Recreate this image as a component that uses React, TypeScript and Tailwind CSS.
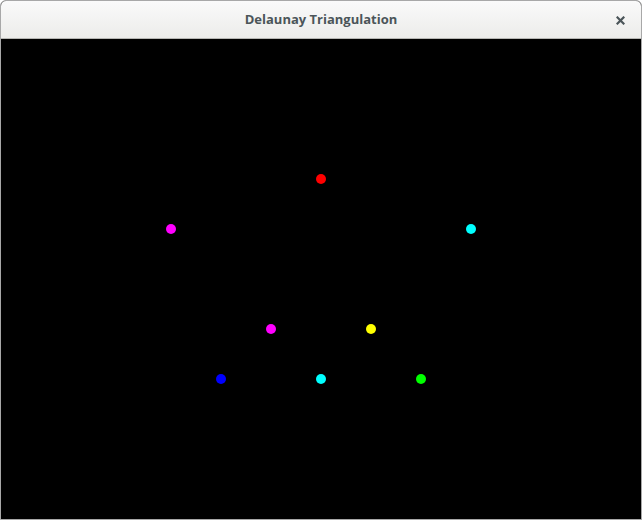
const dots = [
  { x: 321, y: 179, c: '#ff0000' },
  { x: 171, y: 229, c: '#ff00ff' },
  { x: 471, y: 229, c: '#00ffff' },
  { x: 271, y: 329, c: '#ff00ff' },
  { x: 371, y: 329, c: '#ffff00' },
  { x: 221, y: 379, c: '#0000ff' },
  { x: 321, y: 379, c: '#00ffff' },
  { x: 421, y: 379, c: '#00ff00' },
];

export default function App() {
  return (
    <div className="flex h-[520px] w-[642px] flex-col overflow-hidden rounded-t-[6px] border border-[#a8a8a8] bg-black">
      {/* title bar */}
      <div className="relative flex h-[38px] shrink-0 items-center justify-center border-b border-[#b6b6b3] bg-gradient-to-b from-[#fafafa] to-[#ececea]">
        <span className="font-['Open_Sans',sans-serif] text-[13px] font-bold text-[#4b5559]">
          Delaunay Triangulation
        </span>
        <svg width="9" height="9" viewBox="0 0 9 9" className="absolute right-[16px] top-[15px]">
          <path d="M1.5 1.5 L7.5 7.5 M7.5 1.5 L1.5 7.5" stroke="#4b5559" strokeWidth="2.2" strokeLinecap="square" />
        </svg>
      </div>
      {/* canvas */}
      <div className="relative flex-1 bg-black">
        <svg width="640" height="480" className="absolute left-0 top-0">
          {dots.map((d, i) => (
            <circle key={i} cx={d.x - 1} cy={d.y - 39} r={5} fill={d.c} />
          ))}
        </svg>
      </div>
    </div>
  );
}
